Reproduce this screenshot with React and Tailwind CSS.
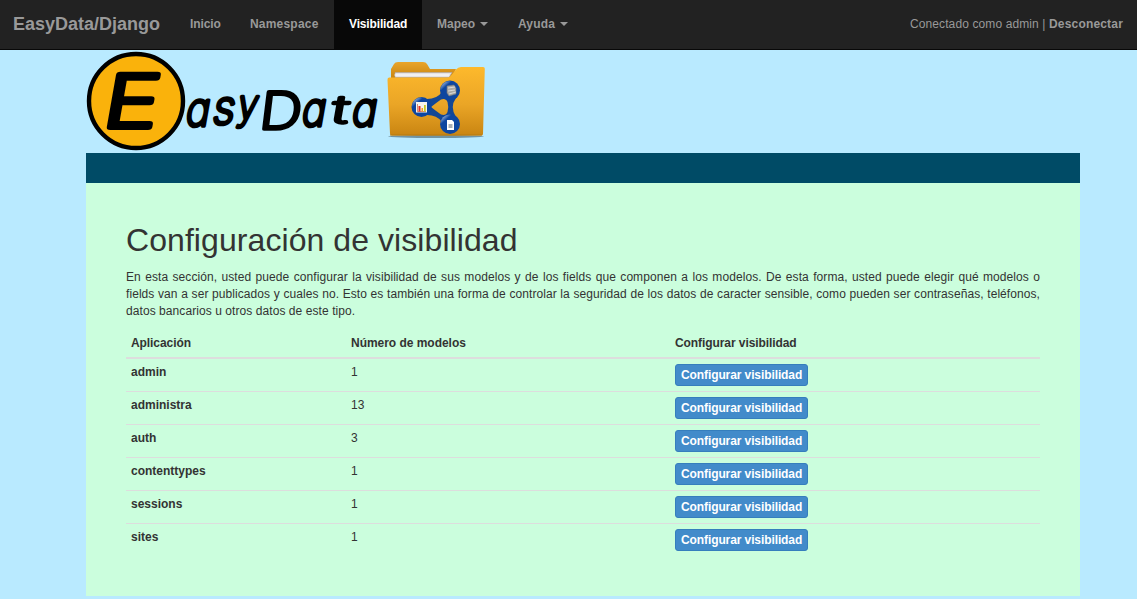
import React from "react";

const rows = [
  ["admin", 1],
  ["administra", 13],
  ["auth", 3],
  ["contenttypes", 1],
  ["sessions", 1],
  ["sites", 1],
];

function Caret() {
  return (
    <span className="ml-[5px] inline-block border-x-4 border-t-4 border-x-transparent border-t-[#999] align-middle" />
  );
}

function NavItem({ children, active, caret, className }) {
  return (
    <a
      href="#"
      className={
        (active ? "bg-[#080808] text-white " : "text-[#999] ") +
        "flex h-[49px] items-center whitespace-nowrap pb-px pl-[15px] font-bold " +
        className
      }
    >
      {children}
      {caret && <Caret />}
    </a>
  );
}

function Navbar() {
  return (
    <nav className="flex h-[50px] items-start border-b border-[#080808] bg-[#222]">
      <a href="#" className="flex h-[49px] w-[175px] items-center pl-[13px] text-[18px] font-bold text-[#999]">
        EasyData/Django
      </a>
      <NavItem className="w-[60px] tracking-[-0.1px]">Inicio</NavItem>
      <NavItem className="w-[99px] tracking-[0.2px]">Namespace</NavItem>
      <NavItem active className="w-[88px] tracking-[-0.15px]">Visibilidad</NavItem>
      <NavItem caret className="w-[81px]">Mapeo</NavItem>
      <NavItem caret className="w-[80px] tracking-[0.15px]">Ayuda</NavItem>
      <p className="ml-auto flex h-[49px] items-center whitespace-pre pr-[14px] pb-px tracking-[0.11px] text-[#999]">
        Conectado como admin | <a href="#" className="font-bold tracking-[0.18px]">Desconectar</a>
      </p>
    </nav>
  );
}

function Logo() {
  return (
    <svg width="400" height="103" viewBox="86 50 400 103" className="block">
      <defs>
        <linearGradient id="front" x1="0" y1="0" x2="0" y2="1">
          <stop offset="0" stopColor="#fdb92c" />
          <stop offset="0.55" stopColor="#eaa526" />
          <stop offset="1" stopColor="#c98512" />
        </linearGradient>
        <linearGradient id="back" x1="0" y1="0" x2="0" y2="1">
          <stop offset="0" stopColor="#e9a52b" />
          <stop offset="1" stopColor="#c98511" />
        </linearGradient>
        <linearGradient id="gloss" x1="0" y1="0" x2="0.7" y2="0.8">
          <stop offset="0" stopColor="#fff" stopOpacity="0.95" />
          <stop offset="0.4" stopColor="#fff" stopOpacity="0" />
        </linearGradient>
      </defs>
      <circle cx="136" cy="101" r="47" fill="#fab20b" stroke="#000" strokeWidth="4.4" />
      <g
        fontFamily="Inter, sans-serif"
        fontWeight="200"
        stroke="#000"
        strokeLinejoin="round"
        strokeLinecap="round"
        style={{ fontFeatureSettings: '"cv11"' }}
      >
        <text transform="translate(101 127) skewX(-10)" fontSize="72" strokeWidth="6" textLength="54" lengthAdjust="spacingAndGlyphs">E</text>
        <g fontSize="47" strokeWidth="3.6">
          <text transform="translate(184 126) skewX(-10)" textLength="24" lengthAdjust="spacingAndGlyphs">a</text>
          <text transform="translate(211 124) skewX(-10)" textLength="22" lengthAdjust="spacingAndGlyphs">s</text>
          <text transform="translate(236 119) skewX(-10)" fontSize="41" textLength="20" lengthAdjust="spacingAndGlyphs">y</text>
          <text transform="translate(258 129) skewX(-7)" fontSize="51" textLength="42" lengthAdjust="spacingAndGlyphs">D</text>
          <text transform="translate(300 126) skewX(-10)" textLength="24" lengthAdjust="spacingAndGlyphs">a</text>
          <text transform="translate(330 123) skewX(-10)" fontSize="38" strokeWidth="3" textLength="17" lengthAdjust="spacingAndGlyphs">t</text>
          <text transform="translate(350 126) skewX(-10)" textLength="25" lengthAdjust="spacingAndGlyphs">a</text>
        </g>
      </g>
      <ellipse cx="436" cy="136.5" rx="48" ry="1.5" fill="#496570" opacity="0.65" />
      <path d="M391 78V69l3-5q1-2 4-2h25q3 0 4 2l3 5h26l-4 9Z" fill="url(#back)" />
      <path d="M395 72.5h57l-3 5h-54Z" fill="#e4e2e5" stroke="#aaa4a4" strokeWidth=".6" />
      <path d="M394.5 75h55" stroke="#fff" />
      <path d="M389 77.5h58q3 0 5-3l4-5q2-2.500 5-2.500h22q2 0 1.800 2L483 134q0 1.500-2 1.500h-89q-2 0-2-2L387.500 80q-.2-2.500 1.500-2.500Z" fill="url(#front)" />
      <path d="M390 135h92" stroke="#b77a10" />
      <path d="M427 99Q437 99 442 92L456 98Q449.500 107 456 117L442 122Q437 115 427 115ZM431 107Q436 111 441 114.500Q446 116 447.500 112Q449 107 447.500 102Q446 98 441 99.500Q436 103 431 107Z" fill="#134795" fillRule="evenodd" />
      <g fill="#0d46a0">
        <circle cx="450" cy="90.500" r="10" />
        <circle cx="421.500" cy="107" r="10" />
        <circle cx="450" cy="124" r="10" />
      </g>
      <g fill="url(#gloss)">
        <circle cx="449.500" cy="90" r="9" />
        <circle cx="421" cy="106.500" r="9" />
        <circle cx="449.500" cy="123.500" r="9" />
      </g>
      <path d="m447 86 7-1 2 3v6l-7 2-2-3Z" fill="#aaa9a5" stroke="#777" strokeWidth=".6" />
      <path d="m448 88 7-1m-7 4 7-1m-6 4 7-2" stroke="#eee" strokeWidth=".7" />
      <path d="M416 102h11v10.500H416Z" fill="#f7f5ed" />
      <path d="M417.500 104v7.500h8.500" stroke="#c55b42" fill="none" strokeWidth=".7" />
      <path d="M418.500 106h2v5.500h-2Z" fill="#df2f23" />
      <path d="M421.500 108h1.500v3.500h-1.500Z" fill="#f3a51a" />
      <path d="M424 105h1.800v6.500H424Z" fill="#c8cb25" />
      <path d="M447 120h5l2 2v8h-7Z" fill="#fff" />
      <path d="M448.500 125h4m-4 2h4" stroke="#53606c" strokeWidth="1" />
    </svg>
  );
}

export default function App() {
  return (
    <div className="h-[599px] overflow-hidden bg-[#b9eaff] font-['Liberation_Sans',Arial,sans-serif] text-[12px] leading-[17px] text-[#333]">
      <Navbar />
      <div className="ml-[86px] w-[994px]">
        <Logo />
        <div className="h-[30px] bg-[#004b66]" />
        <main className="h-[413px] bg-[#cbfedd] px-10 pt-[39px]">
          <h1 className="h-[47px] whitespace-nowrap text-[32px] leading-[36px] tracking-[0.07px]">Configuración de visibilidad</h1>
          <p className="mb-[10px] text-justify tracking-[0.07px]">
            En esta sección, usted puede configurar la visibilidad de sus modelos y de los fields que componen a los modelos. De esta forma, usted puede elegir qué modelos o{" "}
            <span className="whitespace-nowrap">fields van</span> a ser publicados y cuales no. Esto es también una forma de controlar la seguridad de los datos de caracter sensible, como pueden ser contraseñas, teléfonos,{" "}
            <span className="whitespace-nowrap">datos bancarios</span> u otros datos de este tipo.
          </p>
          <div className="grid h-[29px] grid-cols-[220px_324px_1fr] border-b-2 border-[#ddd] font-bold tracking-[-0.08px]">
            <div className="p-[5px]">Aplicación</div>
            <div className="p-[5px] tracking-[-0.03px]">Número de modelos</div>
            <div className="p-[5px]">Configurar visibilidad</div>
          </div>
          {rows.map(([name, count]) => (
            <div key={name} className="grid h-[33px] grid-cols-[220px_324px_1fr] border-b border-[#ddd] last:border-b-0">
              <div className="p-[5px] font-bold">{name}</div>
              <div className="p-[5px]">{count}</div>
              <div className="p-[5px]">
                <button className="block h-[22px] w-[133px] whitespace-nowrap rounded-[3px] border border-[#357ebd] bg-[#428bca] pl-[5px] text-left text-[12px] leading-[20px] font-bold tracking-[-0.1px] text-white">
                  Configurar visibilidad
                </button>
              </div>
            </div>
          ))}
        </main>
      </div>
    </div>
  );
}
